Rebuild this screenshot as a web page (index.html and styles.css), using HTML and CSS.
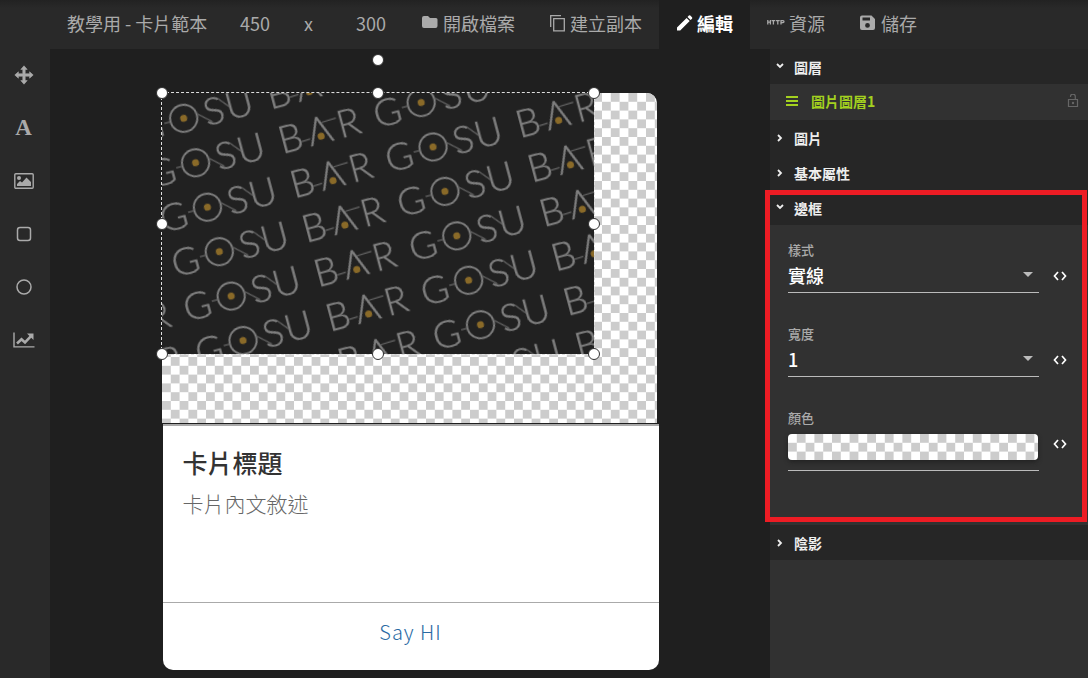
FILE: index.html
```html
<!DOCTYPE html>
<html lang="zh-Hant">
<head>
<meta charset="utf-8">
<title>卡片編輯器</title>
<link rel="stylesheet" href="styles.css">
</head>
<body>
<div class="app">
  <header class="topbar">
    <input class="doc-title" aria-label="名稱" value="教學用 - 卡片範本">
    <input class="doc-size" aria-label="寬" value="450">
    <span class="doc-times">x</span>
    <input class="doc-size" aria-label="高" value="300">
    <nav class="tabs">
      <button class="tab"><svg width="18" height="18" viewBox="0 0 18 18"><path d="M1 4a2 2 0 0 1 2-2h4l2 2h6a1.500 1.500 0 0 1 1.500 1.500V12a2 2 0 0 1-2 2H3a2 2 0 0 1-2-2z" fill="currentColor"/></svg>開啟檔案</button>
      <button class="tab"><svg width="17" height="18" viewBox="0 0 17 18" fill="none" stroke="currentColor" stroke-width="1.300"><path d="M1.700 13V1.700H12M4.700 4.700h10.600v12.100H4.700z"/></svg>建立副本</button>
      <button class="tab tab-active"><svg width="17" height="18" viewBox="0 0 17 18"><path d="M1 13.500 10.600 3.900l3.100 3.100L4.200 16.500H1zM11.500 3l1.400-1.400a1 1 0 0 1 1.400 0l1.700 1.700a1 1 0 0 1 0 1.400L14.600 6.100z" fill="currentColor"/></svg>編輯</button>
      <button class="tab"><svg width="18" height="18" viewBox="0 0 18 18" fill="none" stroke="currentColor" stroke-width="1.300"><path d="M.8 6v4.500M3.400 6v4.500M.8 8.200h2.600M4.600 6.600h3.600M6.400 6.600v3.900M8.900 6.600h3.800M10.800 6.600v3.900M14 10.500V6.600h2q1 0 1 1t-1 1h-2"/></svg>資源</button>
      <button class="tab"><svg width="18" height="18" viewBox="0 0 18 18"><path fill-rule="evenodd" d="M3 1.500h9.500L16 5v9a2 2 0 0 1-2 2H3a2 2 0 0 1-2-2V3.500a2 2 0 0 1 2-2zM3.500 3.500v3h7.500v-3zM8.500 9a2.400 2.400 0 1 0 0 4.800 2.400 2.400 0 0 0 0-4.800z" fill="currentColor"/></svg>儲存</button>
    </nav>
  </header>

  <aside class="toolbar">
    <button class="tool" aria-label="移動"><svg width="20" height="20" viewBox="0 0 20 20"><path d="M10 .8 13.200 4.400H11.200V8.800H15.600V6.800L19.200 10 15.600 13.200V11.200H11.200V15.600H13.200L10 19.200 6.800 15.600H8.800V11.200H4.400V13.200L.8 10 4.400 6.800V8.800H8.800V4.400H6.800z" fill="currentColor" stroke="currentColor" stroke-width=".6"/></svg></button>
    <button class="tool tool-text" aria-label="文字">A</button>
    <button class="tool" aria-label="圖片"><svg width="20" height="16" viewBox="0 0 20 16"><rect x=".8" y=".8" width="18.400" height="14.400" rx="1" fill="none" stroke="currentColor" stroke-width="1.400"/><circle cx="5" cy="5" r="2" fill="currentColor"/><path d="M3 13v-2l3-3 2 1.500 4.500-5L17 9v4z" fill="currentColor"/></svg></button>
    <button class="tool" aria-label="方形"><svg width="16" height="16" viewBox="0 0 16 16"><rect x="1.500" y="1.500" width="13" height="13" rx="2.500" fill="none" stroke="currentColor" stroke-width="1.500"/></svg></button>
    <button class="tool" aria-label="圓形"><svg width="16" height="16" viewBox="0 0 16 16"><circle cx="8" cy="8" r="7" fill="none" stroke="currentColor" stroke-width="1.500"/></svg></button>
    <button class="tool" aria-label="圖表"><svg width="22" height="16" viewBox="0 0 22 16"><path d="M1 .5v14.400h20.500" fill="none" stroke="currentColor" stroke-width="1.400"/><path d="m4 11.500 4.500-4.300 3.500 3.300 6-6.300" fill="none" stroke="currentColor" stroke-width="2.600"/><path d="M14 1.500h6.500V8z" fill="currentColor"/></svg></button>
  </aside>

  <main class="stage">
    <div class="card">
      <div class="card-media">
        <svg class="checker" aria-hidden="true">
          <defs>
            <pattern id="squares" width="17.600" height="17.600" patternUnits="userSpaceOnUse">
              <path d="M8.800 0h8.800v8.800H8.800zM0 8.800h8.800v8.800H0z" fill="#ccc"/>
            </pattern>
          </defs>
          <rect width="100%" height="100%" fill="#fff"/>
          <rect width="100%" height="100%" fill="url(#squares)"/>
        </svg>
        <div class="layer">
          <svg class="layer-art" role="img" aria-label="GOSU BAR">
            <defs>
              <pattern id="brand" x="-55" y="-23" width="233.500" height="46" patternUnits="userSpaceOnUse" patternTransform="translate(21.700 25.300) rotate(-14.950)">
                <g transform="translate(55 23)">
                  <g class="brand-letters">
                    <text x="-35" y="14">G</text>
                    <text x="31" y="14">S</text>
                    <text x="57" y="14">U</text>
                    <text x="98" y="14">B</text>
                    <text x="128" y="14">Λ</text>
                    <text x="158" y="14">R</text>
                  </g>
                  <circle cx="0" cy="0" r="13.600" fill="none" stroke="#808080" stroke-width="2"/>
                  <path d="M-20 0h6M14 -1 27 10.800M38 -10.400 47 .5M108 7l9-.5M132-6.400l15-.6" stroke="#5c5c5c" stroke-width="1.400"/>
                  <circle cx="0" cy="0" r="3.500" fill="#8a6a28"/>
                  <circle cx="128.200" cy="6.700" r="3.500" fill="#8a6a28"/>
                </g>
              </pattern>
            </defs>
            <rect width="100%" height="100%" fill="#212121"/>
            <rect width="100%" height="100%" fill="url(#brand)"/>
          </svg>
          <i class="handle rotate"></i>
          <i class="handle top start"></i><i class="handle top center"></i><i class="handle top end"></i>
          <i class="handle middle start"></i><i class="handle middle end"></i>
          <i class="handle bottom start"></i><i class="handle bottom center"></i><i class="handle bottom end"></i>
        </div>
      </div>
      <div class="card-body">
        <div class="card-copy">
          <h1>卡片標題</h1>
          <p>卡片內文敘述</p>
        </div>
        <a class="card-action" href="#">Say HI</a>
      </div>
    </div>
  </main>

  <aside class="panel">
    <section>
      <button class="section-head"><svg class="chev" viewBox="0 0 8 8"><path d="M1 1l3 3 3-3"/></svg>圖層</button>
      <div class="layer-row">
        <svg width="12" height="12" viewBox="0 0 12 12"><path d="M0 2h12M0 6h12M0 10h12" stroke="currentColor" stroke-width="2"/></svg>
        <span>圖片圖層1</span>
        <svg class="lock" width="12" height="14" viewBox="0 0 12 14"><path d="M1.500 5.500h9v7h-9zM3.500 3V2.500a2.200 2.200 0 0 1 4.800 0v3" fill="none" stroke="currentColor" stroke-width="1.200"/><circle cx="6" cy="9" r="1.200" fill="currentColor"/></svg>
      </div>
    </section>
    <button class="section-head"><svg class="chev" viewBox="0 0 8 8"><path d="M2 1l3 3-3 3"/></svg>圖片</button>
    <button class="section-head"><svg class="chev" viewBox="0 0 8 8"><path d="M2 1l3 3-3 3"/></svg>基本屬性</button>
    <section class="highlighted">
      <button class="section-head"><svg class="chev" viewBox="0 0 8 8"><path d="M1 1l3 3 3-3"/></svg>邊框</button>
      <div class="fields">
        <div class="field">
          <label for="style">樣式</label>
          <div class="control"><select id="style"><option>實線</option></select></div>
          <button class="code" aria-label="樣式代碼"><svg width="14" height="10" viewBox="0 0 14 10"><path d="M5 1 1.500 5 5 9M9 1l3.500 4L9 9"/></svg></button>
        </div>
        <div class="field">
          <label for="width">寬度</label>
          <div class="control"><select id="width"><option>1</option></select></div>
          <button class="code" aria-label="寬度代碼"><svg width="14" height="10" viewBox="0 0 14 10"><path d="M5 1 1.500 5 5 9M9 1l3.500 4L9 9"/></svg></button>
        </div>
        <div class="field">
          <label for="color">顏色</label>
          <div class="swatch-line"><button id="color" class="swatch"><svg class="checker" aria-hidden="true"><rect width="100%" height="100%" fill="#fff"/><rect width="100%" height="100%" fill="url(#squares)"/></svg></button></div>
          <button class="code" aria-label="顏色代碼"><svg width="14" height="10" viewBox="0 0 14 10"><path d="M5 1 1.500 5 5 9M9 1l3.500 4L9 9"/></svg></button>
        </div>
      </div>
    </section>
    <button class="section-head"><svg class="chev" viewBox="0 0 8 8"><path d="M2 1l3 3-3 3"/></svg>陰影</button>
  </aside>
</div>
</body>
</html>
```
FILE: styles.css
```css
* { box-sizing: border-box; }
body {
  margin: 0;
  background: #1f1f1f;
  color: #aaa;
  font-family: "Noto Sans CJK TC", "Noto Sans", sans-serif;
}
button, input, select {
  margin: 0;
  padding: 0;
  border: 0;
  background: none;
  color: inherit;
  font: inherit;
}
svg { display: block; flex: none; }

.app {
  display: grid;
  grid-template: 49px 1fr / 50px 1fr 318px;
  min-height: 100vh;
}

.topbar {
  grid-column: 1 / -1;
  display: flex;
  padding-left: 50px;
  background: linear-gradient(#222, #292929 8px);
  font-size: 18px;
}
.doc-title { width: 172px; padding: 0 0 3px 17px; }
.doc-size { width: 66px; padding-bottom: 3px; text-align: center; }
.doc-times { width: 50px; padding-left: 16px; line-height: 46px; }
.tabs { display: flex; }
.tab {
  display: flex;
  align-items: center;
  gap: 4px;
  padding: 0 17px 3px;
  white-space: nowrap;
}
.tab svg { margin-bottom: 1px; }
.tab-active { background: #1f1f1f; color: #fff; font-weight: 700; }

.toolbar {
  display: flex;
  flex-direction: column;
  background: #292929;
}
.tool {
  display: flex;
  align-items: center;
  justify-content: center;
  height: 53px;
  padding: 0 3px 2px 0;
}
.tool-text { font: 700 23px "Liberation Serif", serif; }

.stage { padding: 44px 0 8px; }
.card { width: 497px; margin: 0 auto; }
.card-media {
  position: relative;
  width: 495px;
  height: 330px;
}
.checker { width: 100%; height: 100%; }
.card-media > .checker { border-radius: 0 10px 0 0; }
.layer {
  position: absolute;
  top: 0;
  left: 0;
  width: 432px;
  height: 261px;
}
.layer::after {
  content: "";
  position: absolute;
  inset: -1px -1px -1px -1px;
  border: 1px dashed #ddd;
}
.layer-art { width: 100%; height: 100%; }
.brand-letters {
  font-family: Lato, sans-serif;
  font-size: 38px;
  font-weight: 300;
  fill: #808080;
  stroke: #808080;
  stroke-width: 0.4;
  text-anchor: middle;
}
.handle {
  position: absolute;
  z-index: 1;
  width: 12px;
  height: 12px;
  margin: -6px;
  border: 1px solid #333;
  border-radius: 50%;
  background: #fff;
}
.rotate { top: -33px; left: 50%; }
.top { top: 0; }
.middle { top: 50%; }
.bottom { top: 100%; }
.start { left: 0; }
.center { left: 50%; }
.end { left: 100%; }

.card-body {
  margin: 1px 0 0 1px;
  border-top: 2px solid #aaa;
  border-radius: 0 0 10px 10px;
  background: #fff;
}
.card-copy { height: 176px; padding: 18px 20px; }
.card-copy h1 {
  margin: 0;
  color: #333;
  font-size: 25px;
  font-weight: 500;
  line-height: 36px;
}
.card-copy p {
  margin: 7px 0 0;
  color: #666;
  font-size: 21px;
  font-weight: 300;
  line-height: 32px;
}
.card-action {
  display: block;
  height: 68px;
  border-top: 1px solid #aaa;
  color: #2a6aa3;
  font-size: 20px;
  font-weight: 300;
  letter-spacing: 1px;
  line-height: 58px;
  text-align: center;
  text-decoration: none;
}

.panel {
  background: #313131;
  color: #eee;
  font-size: 14px;
}
.section-head {
  display: flex;
  align-items: center;
  gap: 10px;
  width: 100%;
  height: 35px;
  padding: 1px 6px 0;
  background: #262626;
  font-weight: 700;
}
.chev { width: 8px; height: 8px; }
.chev path { fill: none; stroke: currentColor; stroke-width: 1.8; }
.layer-row {
  display: flex;
  align-items: center;
  gap: 13px;
  height: 36px;
  padding: 0 9px 2px 16px;
  color: #a3d11f;
  font-weight: 700;
}
.lock { margin-left: auto; color: #666; }

.highlighted { position: relative; }
.highlighted::after {
  content: "";
  position: absolute;
  inset: 0 1px 3px -5px;
  border: 5px solid #ed1c24;
  pointer-events: none;
}
.fields {
  display: flex;
  flex-direction: column;
  gap: 32px;
  padding: 16px 18px 54px;
}
.field {
  display: grid;
  grid-template-columns: 1fr 17px;
  column-gap: 14px;
}
.field label {
  grid-column: 1 / -1;
  color: #aaa;
  font-size: 13px;
  font-weight: 500;
  line-height: 18px;
}
.control { display: flex; position: relative; }
.control select {
  width: 100%;
  height: 34px;
  padding-bottom: 2px;
  border-bottom: 1px solid #bbb;
  appearance: none;
  color: #fff;
  font-size: 18px;
  font-weight: 500;
}
.control::after {
  content: "";
  position: absolute;
  top: 13px;
  right: 6px;
  border: 5px solid transparent;
  border-top-color: #bbb;
  border-bottom: 0;
}
.swatch-line { padding: 7px 1px 10px 0; border-bottom: 1px solid #bbb; }
.swatch {
  display: block;
  width: 100%;
  height: 26px;
  overflow: hidden;
  border-radius: 4px;
  box-shadow: 0 2px 4px #222;
}
.code { height: 34px; }
.code path { fill: none; stroke: #fff; stroke-width: 1.7; }
```
